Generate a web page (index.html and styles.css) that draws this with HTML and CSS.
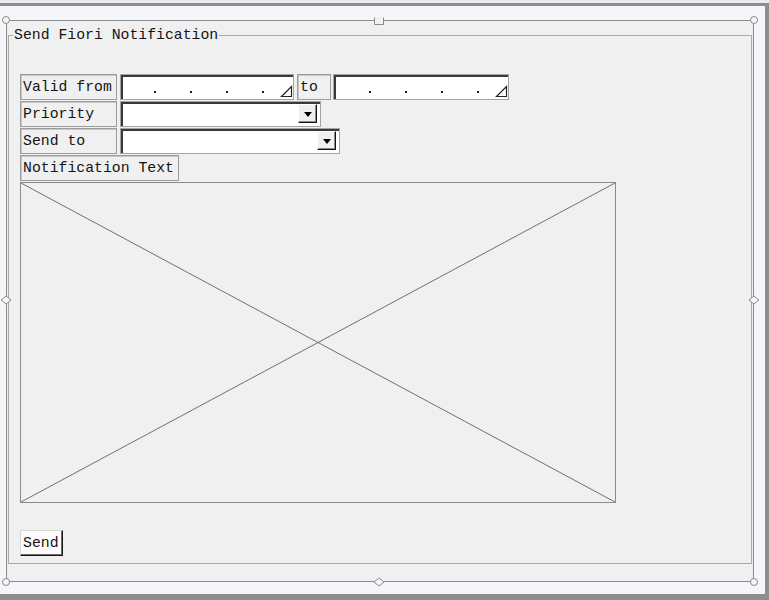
FILE: index.html
```html
<!DOCTYPE html>
<html>
<head>
<meta charset="utf-8">
<link rel="stylesheet" href="styles.css">
</head>
<body>
<div class="window">
  <div class="frame">
    <span class="handle h-tl"><svg width="10" height="10"><circle cx="5" cy="5" r="3.5" fill="#f4f6fa" stroke="#8a8a8a"/></svg></span>
    <span class="handle h-tr"><svg width="10" height="10"><circle cx="5" cy="5" r="3.5" fill="#f4f6fa" stroke="#8a8a8a"/></svg></span>
    <span class="handle h-bl"><svg width="10" height="10"><circle cx="5" cy="5" r="3.5" fill="#f4f6fa" stroke="#8a8a8a"/></svg></span>
    <span class="handle h-br"><svg width="10" height="10"><circle cx="5" cy="5" r="3.5" fill="#f4f6fa" stroke="#8a8a8a"/></svg></span>
    <span class="handle h-tm"><svg width="12" height="9"><path d="M1.5 0.5 V7.5 H10.5 V0.5" fill="#f0f0f0" stroke="#8a8a8a"/></svg></span>
    <span class="handle h-bm"><svg width="12" height="10"><path d="M1 5 L6 1 L11 5 L6 9 Z" fill="#f4f6fa" stroke="#8a8a8a"/></svg></span>
    <span class="handle h-lm"><svg width="12" height="10"><path d="M1 5 L6 1 L11 5 L6 9 Z" fill="#f4f6fa" stroke="#8a8a8a"/></svg></span>
    <span class="handle h-rm"><svg width="12" height="10"><path d="M1 5 L6 1 L11 5 L6 9 Z" fill="#f4f6fa" stroke="#8a8a8a"/></svg></span>

    <fieldset class="group">
      <legend class="group-title">Send Fiori Notification</legend>
      <div class="form">
        <div class="row">
          <div class="label w-valid">Valid from</div>
          <div class="input date date1">
            <span class="dot"></span><span class="dot"></span><span class="dot"></span><span class="dot"></span>
            <svg class="tri" width="13" height="13"><path d="M11.5 1.5 V11.5 H1.5 Z" fill="none" stroke="#222" stroke-width="1.2"/></svg>
          </div>
          <div class="label w-to">to</div>
          <div class="input date date2">
            <span class="dot"></span><span class="dot"></span><span class="dot"></span><span class="dot"></span>
            <svg class="tri" width="13" height="13"><path d="M11.5 1.5 V11.5 H1.5 Z" fill="none" stroke="#222" stroke-width="1.2"/></svg>
          </div>
        </div>
        <div class="row">
          <div class="label w-valid">Priority</div>
          <div class="input combo w-prio"><span class="ddbtn"><span class="arrow"></span></span></div>
        </div>
        <div class="row">
          <div class="label w-valid">Send to</div>
          <div class="input combo w-send"><span class="ddbtn"><span class="arrow"></span></span></div>
        </div>
        <div class="row">
          <div class="label w-notif">Notification Text</div>
        </div>
        <div class="textbox">
          <svg width="594" height="319" viewBox="0 0 594 319" preserveAspectRatio="none"><line x1="0" y1="0" x2="594" y2="319" stroke="#707070"/><line x1="594" y1="0" x2="0" y2="319" stroke="#707070"/></svg>
        </div>
        <div class="actions"><button class="btn">Send</button></div>
      </div>
    </fieldset>
  </div>
</div>
</body>
</html>
```

FILE: styles.css
```css
html, body {
  margin: 0;
  padding: 0;
}
body {
  background: #ececec;
  font-family: "Liberation Mono", "Courier New", monospace;
  font-size: 14.8px;
  color: #141414;
}
.window {
  margin-top: 3px;
  width: 769px;
  height: 597px;
  box-sizing: border-box;
  border-top: 3px solid #8e8e8e;
  border-right: 4px solid #8e8e8e;
  border-bottom: 6px solid #8e8e8e;
  background: #f4f6fa;
  padding: 14px 0 0 6px;
}
.frame {
  position: relative;
  width: 748px;
  height: 562px;
  box-sizing: border-box;
  border: 1px solid #8c8c8c;
  background: #f0f0f0;
}
.handle {
  position: absolute;
  display: block;
  line-height: 0;
}
.handle svg { display: block; }
.h-tl { left: -6px; top: -6px; }
.h-tr { right: -6px; top: -6px; }
.h-bl { left: -6px; bottom: -6px; }
.h-br { right: -6px; bottom: -6px; }
.h-tm { left: 366px; top: -4px; }
.h-bm { left: 366px; bottom: -6px; }
.h-lm { left: -7px; top: 274px; }
.h-rm { right: -7px; top: 274px; }

.group {
  margin: 6px 1px 0 1px;
  padding: 0 0 0 4px;
  border: 1px solid #a9a9a9;
  height: 537px;
  box-sizing: border-box;
  min-width: 0;
}
.group-title {
  padding: 0 1px;
  line-height: 17px;
  font-size: 14.8px;
}
.form {
  padding: 30px 0 0 7px;
}
.row {
  display: flex;
  height: 26px;
  margin-bottom: 1px;
}
.label {
  box-sizing: border-box;
  height: 26px;
  border: 1px solid #9c9c9c;
  box-shadow: inset 1px 1px 0 #c8c8c8;
  padding: 0 0 0 2px;
  line-height: 24px;
  white-space: nowrap;
  background: #f0f0f0;
}
.w-valid { width: 97px; }
.w-to { width: 34px; margin-left: 3px; }
.w-notif { width: 159px; }

.input {
  box-sizing: border-box;
  height: 26px;
  margin-left: 3px;
  border: 1px solid #a4a4a4;
  box-shadow: inset 2px 2px 0 #3a3a3a;
  background: #ffffff;
  display: flex;
  align-items: flex-start;
}
.date1 { width: 174px; padding-left: 33px; }
.date2 { width: 176px; margin-left: 2px; padding-left: 35px; }
.dot {
  width: 2px;
  height: 2px;
  background: #1e1e1e;
  margin-top: 16px;
  margin-right: 34px;
  flex: none;
}
.dot:last-of-type { margin-right: 0; }
.tri {
  margin-left: auto;
  margin-top: 10px;
  margin-right: 0;
  flex: none;
}
.combo {
  justify-content: flex-end;
  padding: 2px 3px 0 0;
}
.w-prio { width: 201px; }
.w-send { width: 220px; }
.ddbtn {
  box-sizing: border-box;
  width: 19px;
  height: 19px;
  background: #f0f0f0;
  border: 1px solid;
  border-color: #ffffff #141414 #141414 #ffffff;
  box-shadow: inset -1px -1px 0 #8a8a8a;
  display: flex;
  align-items: center;
  justify-content: center;
}
.arrow {
  width: 0;
  height: 0;
  border-top: 5px solid #000;
  border-left: 4.5px solid transparent;
  border-right: 4.5px solid transparent;
  margin-top: 1px;
}
.textbox {
  box-sizing: border-box;
  width: 596px;
  height: 321px;
  border: 1px solid #8a8a8a;
  line-height: 0;
}
.textbox svg { display: block; }
.actions {
  margin-top: 27px;
}
.btn {
  font: inherit;
  color: #141414;
  box-sizing: border-box;
  width: 43px;
  height: 26px;
  padding: 0 0 0 2px;
  text-align: left;
  background: #fcfcfc;
  border: 1px solid;
  border-color: #d8d8d8 #1a1a1a #1a1a1a #d8d8d8;
  box-shadow: inset -1px -1px 0 #6a6a6a;
  border-radius: 0;
}
```
